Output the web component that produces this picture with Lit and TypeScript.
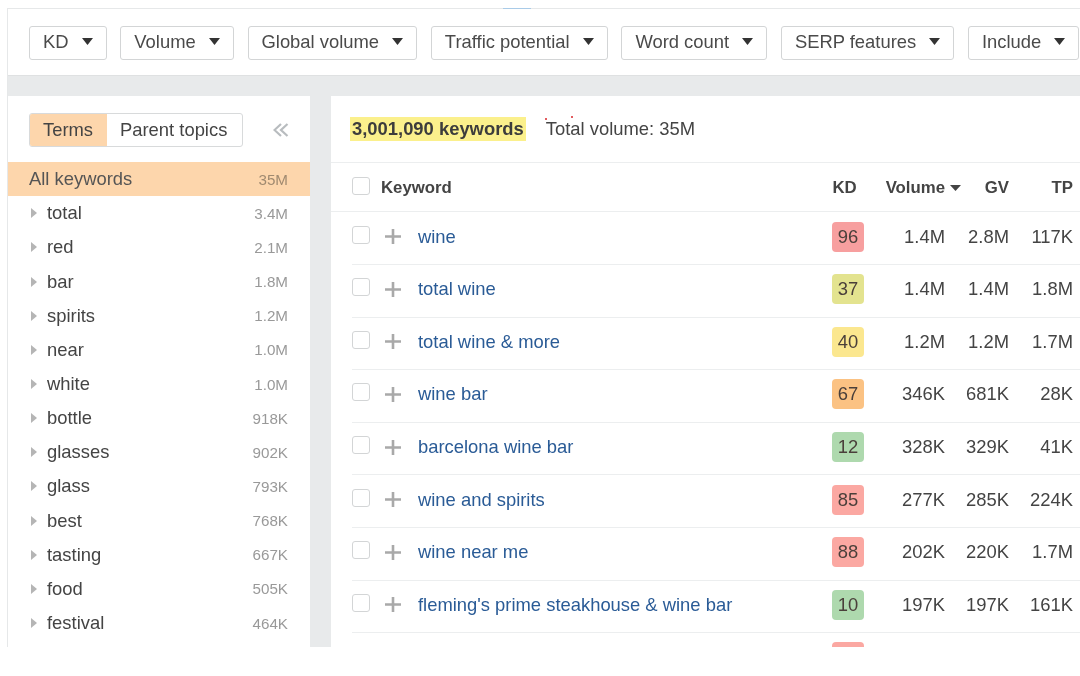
import { LitElement, html, css, svg } from "lit";
import { customElement } from "lit/decorators.js";

const filters = ["KD", "Volume", "Global volume", "Traffic potential", "Word count", "SERP features", "Include"];
const terms: [string, string][] = [
  ["total", "3.4M"], ["red", "2.1M"], ["bar", "1.8M"], ["spirits", "1.2M"], ["near", "1.0M"],
  ["white", "1.0M"], ["bottle", "918K"], ["glasses", "902K"], ["glass", "793K"], ["best", "768K"],
  ["tasting", "667K"], ["food", "505K"], ["festival", "464K"],
];
const rows: [string, number, string, string, string, string][] = [
  ["wine", 96, "#f79f9f", "1.4M", "2.8M", "117K"],
  ["total wine", 37, "#e3e38f", "1.4M", "1.4M", "1.8M"],
  ["total wine & more", 40, "#fbe78f", "1.2M", "1.2M", "1.7M"],
  ["wine bar", 67, "#fbc283", "346K", "681K", "28K"],
  ["barcelona wine bar", 12, "#aed9ae", "328K", "329K", "41K"],
  ["wine and spirits", 85, "#fba8a2", "277K", "285K", "224K"],
  ["wine near me", 88, "#fba8a2", "202K", "220K", "1.7M"],
  ["fleming's prime steakhouse & wine bar", 10, "#aed9ae", "197K", "197K", "161K"],
];

const caret = svg`<svg class="caret" viewBox="0 0 11 7"><path d="M0 0h11L5.500 7z" fill="#333"/></svg>`;
const caretSm = svg`<svg class="caret-sm" viewBox="0 0 11 6"><path d="M0 0h11L5.500 6z" fill="#444"/></svg>`;
const tri = svg`<svg class="tri" viewBox="0 0 6 10"><path d="M0 0l6 5-6 5z" fill="#b5b5b5"/></svg>`;
const plus = svg`<svg class="plus" viewBox="0 0 16 15"><path d="M8 0v15M0 7.500h16" stroke="#a9a9a9" stroke-width="2.600" fill="none"/></svg>`;
const chevrons = svg`<svg class="chev" viewBox="0 0 16 14"><path d="M8 1L1.500 7 8 13M14.500 1L8 7l6.500 6" stroke="#b8bcbf" stroke-width="2.200" fill="none"/></svg>`;

@customElement("app-root")
export class AppRoot extends LitElement {
  static styles = css`
    :host {
      display: block;
      width: 1080px;
      height: 676px;
      background: #fff;
      font-family: "Liberation Sans", Arial, sans-serif;
      color: #444;
      overflow: hidden;
      position: relative;
    }
    .frame {
      margin: 8px 0 0 7px;
      height: 637.500px;
      border-top: 1px solid #e6e8e9;
      border-left: 1px solid #e6e8e9;
      background: #e8eaeb;
      overflow: hidden;
      display: flex;
      flex-direction: column;
      filter: blur(0.3px);
    }
    .filters {
      flex: none;
      height: 67px;
      background: #fff;
      border-bottom: 1px solid #dfe1e2;
      box-sizing: border-box;
      padding: 16.500px 0 0 21px;
      display: flex;
      gap: 13.800px;
      align-items: flex-start;
    }
    .btn {
      flex: none;
      height: 34px;
      box-sizing: border-box;
      border: 1px solid #d3d5d6;
      border-radius: 3px;
      padding: 0 13px 1.500px 13px;
      display: flex;
      align-items: center;
      gap: 13px;
      font-size: 18.4px;
      color: #4a4a4a;
      white-space: nowrap;
    }
    .caret { width: 11px; height: 7px; flex: none; }
    .panels {
      flex: 1;
      min-height: 0;
      margin-top: 20px;
      display: flex;
      gap: 21px;
    }
    .side {
      flex: none;
      width: 302px;
      background: #fff;
      overflow: hidden;
    }
    .side-top {
      height: 66px;
      box-sizing: border-box;
      padding: 17px 21px 0 21px;
      display: flex;
      align-items: flex-start;
      justify-content: space-between;
    }
    .toggle {
      display: flex;
      height: 34px;
      width: 214px;
      box-sizing: border-box;
      border: 1px solid #d8dadb;
      border-radius: 3px;
      font-size: 18.4px;
      overflow: hidden;
    }
    .toggle span { display: flex; align-items: center; padding: 0 0 0 13px; white-space: nowrap; }
    .toggle .on { background: #fdd6ac; width: 77px; box-sizing: border-box; }
    .chev { width: 16px; height: 14px; margin-top: 10px; }
    .term {
      height: 34.17px;
      display: flex;
      align-items: center;
      padding: 0 22px 0 23px;
      font-size: 18.4px;
    }
    .term.all { background: #fdd6ac; padding-left: 21px; color: #555; }
    .term .name { flex: 1; }
    .term .count { font-size: 15.200px; color: #999; }
    .term.all .count { color: #a08a70; }
    .tri { width: 6px; height: 10px; margin-right: 10px; flex: none; }
    .main {
      flex: 1;
      min-width: 0;
      background: #fff;
      overflow: hidden;
    }
    .summary {
      height: 67px;
      box-sizing: border-box;
      border-bottom: 1px solid #eceeef;
      display: flex;
      align-items: center;
      padding: 0 0 0 18.500px;
      font-size: 18.4px;
      gap: 19.500px;
    }
    .hl {
      background: #fbf08c;
      font-weight: 700;
      padding: 1px 2.500px;
      color: #3c3c3c;
    }
    .row {
      height: 52.6px;
      box-sizing: border-box;
      margin-left: 21px;
      padding-right: 7px;
      padding-bottom: 3px;
      border-bottom: 1.6px solid #eceeef;
      display: flex;
      align-items: center;
      font-size: 18.4px;
    }
    .row.head {
      height: 49.4px;
      margin-left: 0;
      padding: 2px 7px 0 21px;
      font-size: 16.8px;
      font-weight: 700;
      color: #444;
    }
    .cb {
      width: 18px;
      height: 18px;
      flex: none;
      box-sizing: border-box;
      border: 1.500px solid #d3d5d6;
      border-radius: 3px;
      margin-bottom: 4px;
    }
    .head .kw { margin-left: 11px; }
    .plus { width: 16px; height: 15px; flex: none; margin-left: 15px; }
    .kw { flex: 1; margin-left: 17px; min-width: 0; white-space: nowrap; }
    a.kw { color: #2a5b96; text-decoration: none; }
    .kd { width: 29px; flex: none; text-align: center; margin-right: 5px; margin-left: -2px; }
    .badge {
      width: 32px;
      height: 30px;
      flex: none;
      border-radius: 4px;
      display: flex;
      align-items: center;
      justify-content: center;
      color: #4a3f3a;
    }
    .num { flex: none; text-align: right; white-space: nowrap; }
    .vol { width: 81px; }
    .gv { width: 64px; }
    .tp { width: 64px; }
    .head .vol { width: 97px; display: flex; justify-content: flex-end; align-items: center; gap: 5px; }
    .head .gv { width: 48px; }
    .head .tp { width: 64px; }
    .caret-sm { width: 11px; height: 6px; flex: none; }
    .clip { align-items: flex-start; padding-top: 9px; border: 0; }
    .spacer { flex: 1; }
    .mark {
      position: absolute;
      left: 503px;
      top: 8px;
      width: 28px;
      height: 1px;
      background: #a9cbe8;
    }
    .dot {
      position: absolute;
      width: 2px;
      height: 2px;
      border-radius: 50%;
      background: #d9252a;
    }
    .d1 { left: 545px; top: 118px; }
    .d2 { left: 571px; top: 116px; }
  `;

  render() {
    return html`
      <div class="frame">
        <div class="filters">
          ${filters.map((f) => html`<div class="btn">${f}${caret}</div>`)}
        </div>
        <div class="panels">
          <div class="side">
            <div class="side-top">
              <div class="toggle"><span class="on">Terms</span><span>Parent topics</span></div>
              ${chevrons}
            </div>
            <div class="term all"><span class="name">All keywords</span><span class="count">35M</span></div>
            ${terms.map(
              ([t, c]) => html`<div class="term">${tri}<span class="name">${t}</span><span class="count">${c}</span></div>`
            )}
          </div>
          <div class="main">
            <div class="summary">
              <span class="hl">3,001,090 keywords</span>
              <span>Total volume: 35M</span>
            </div>
            <div class="row head">
              <div class="cb"></div>
              <span class="kw">Keyword</span>
              <span class="kd">KD</span>
              <span class="num vol">Volume ${caretSm}</span>
              <span class="num gv">GV</span>
              <span class="num tp">TP</span>
            </div>
            ${rows.map(
              ([k, d, col, v, g, tp]) => html`
                <div class="row">
                  <div class="cb"></div>
                  ${plus}
                  <a class="kw">${k}</a>
                  <div class="badge" style="background:${col}">${d}</div>
                  <span class="num vol">${v}</span>
                  <span class="num gv">${g}</span>
                  <span class="num tp">${tp}</span>
                </div>
              `
            )}
            <div class="row clip">
              <div class="spacer"></div>
              <div class="badge" style="background:#fba8a2"></div>
              <span class="num vol"></span><span class="num gv"></span><span class="num tp"></span>
            </div>
          </div>
        </div>
      </div>
      <div class="mark"></div>
      <div class="dot d1"></div>
      <div class="dot d2"></div>
    `;
  }
}
